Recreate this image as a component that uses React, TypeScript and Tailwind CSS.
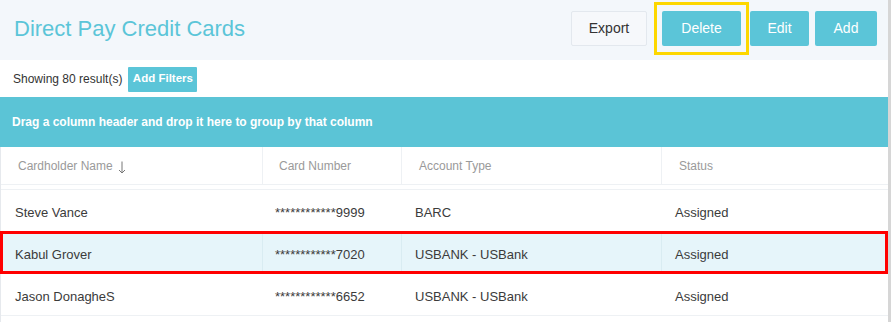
import React from "react";

const rows = [
  { name: "Steve Vance", card: "************9999", type: "BARC", status: "Assigned" },
  { name: "Kabul Grover", card: "************7020", type: "USBANK - USBank", status: "Assigned", selected: true },
  { name: "Jason DonagheS", card: "************6652", type: "USBANK - USBank", status: "Assigned" },
];

const cols = "grid grid-cols-[262px_139px_260px_1fr]";

export default function App() {
  return (
    <div className="w-[891px] h-[322px] overflow-hidden bg-white flex" style={{ fontFamily: '"Liberation Sans", Arial, sans-serif' }}>
      <div className="flex-1 flex flex-col min-w-0">
        {/* Header */}
        <div className="h-[60px] bg-[#f3f7fb] flex items-center pl-[14px] pr-[11px] pb-[3px] shrink-0">
          <h1 className="text-[22px] text-[#5bc5d8] leading-none mt-[1px]">Direct Pay Credit Cards</h1>
          <div className="ml-auto flex items-center">
            <button className="h-[35px] w-[76px] border border-[#e3e8ee] bg-[#f6f8fb] text-[14px] text-[#333] rounded-[2px]">Export</button>
            <div className="ml-[7px] border-[3px] border-[#fdd700] px-[5px] py-[6px] -my-[2px]">
              <button className="h-[35px] w-[79px] bg-[#5bc5d8] text-white text-[14px] rounded-[2px] block">Delete</button>
            </div>
            <button className="ml-[1px] h-[35px] w-[59px] bg-[#5bc5d8] text-white text-[14px] rounded-[2px]">Edit</button>
            <button className="ml-[6px] h-[35px] w-[62px] bg-[#5bc5d8] text-white text-[14px] rounded-[2px]">Add</button>
          </div>
        </div>
        {/* Filters */}
        <div className="h-[37px] flex items-center pl-[13px] shrink-0">
          <span className="text-[12px] text-[#333]">Showing 80 result(s)</span>
          <button className="ml-[6px] h-[25px] w-[69px] bg-[#5bc5d8] text-white text-[11.5px] font-bold rounded-[1px] mt-[1px]">Add Filters</button>
        </div>
        {/* Grid */}
        <div className="border-l border-[#e6e9ed] flex-1 flex flex-col">
          <div className="h-[50px] bg-[#5bc4d6] flex items-center pl-[12px] text-white text-[12px] font-bold shrink-0 ml-[-1px]">
            Drag a column header and drop it here to group by that column
          </div>
          <div className={`${cols} h-[38px] border-b border-[#eef1f4] text-[12px] text-[#9a9a9a]`}>
            <div className="flex items-center pl-[17px] border-r border-[#eef1f4]">
              Cardholder Name
              <svg width="8" height="13" viewBox="0 0 8 13" className="ml-[5px] mt-[3px]" fill="none" stroke="#777" strokeWidth="1">
                <path d="M4 0.5V12" />
                <path d="M1 9L4 12L7 9" />
              </svg>
            </div>
            <div className="flex items-center pl-[16px] border-r border-[#eef1f4]">Card Number</div>
            <div className="flex items-center pl-[17px] border-r border-[#eef1f4]">Account Type</div>
            <div className="flex items-center pl-[17px]">Status</div>
          </div>
          <div className="h-[5px] border-b border-[#eef1f4]" />
          {rows.map((r) => (
            <div
              key={r.name}
              className={`${cols} relative h-[42px] border-b border-[#eef1f4] text-[13px] text-[#3b3b3b] ${r.selected ? "bg-[#e6f5fa]" : "bg-white"}`}
            >
              <div className={`flex items-center pl-[14px] pt-[5px] ${r.selected ? "border-r border-[#d9ecf2]" : ""}`}>{r.name}</div>
              <div className={`flex items-center pl-[12px] pt-[5px] ${r.selected ? "border-r border-[#d9ecf2]" : ""}`}>{r.card}</div>
              <div className={`flex items-center pl-[13px] pt-[5px] ${r.selected ? "border-r border-[#d9ecf2]" : ""}`}>{r.type}</div>
              <div className="flex items-center pl-[13px] pt-[5px]">{r.status}</div>
              {r.selected && (
                <span className="absolute left-[-1px] right-[0px] top-[-1px] bottom-[-1px] border-[3px] border-[#ff0000] pointer-events-none" />
              )}
            </div>
          ))}
        </div>
      </div>
      <div className="w-[3px] bg-[#d6d6d6] shrink-0" />
    </div>
  );
}
